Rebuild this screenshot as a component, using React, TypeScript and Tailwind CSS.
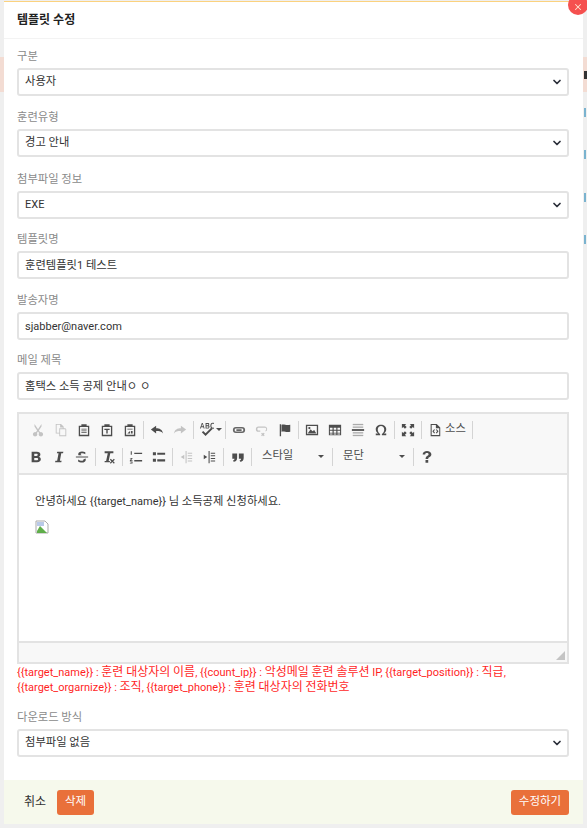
import React from 'react'
import { ChevronDown, X } from 'lucide-react'

// hangul runs get a bigger size than the latin runs around them
function T({ text, ko = 'text-[11.3px]', en = 'text-[11px]' }: { text: string; ko?: string; en?: string }) {
  const parts = text.split(/([\uAC00-\uD7A3\u3131-\u318E]+)/)
  return (
    <>
      {parts.map((p, i) => (
        <span key={i} className={i % 2 === 1 ? ko : en}>
          {p}
        </span>
      ))}
    </>
  )
}

function Label({ text }: { text: string }) {
  return (
    <div className="mb-1 h-[18px] leading-[21px] text-[#8a8a8a]">
      <T text={text} />
    </div>
  )
}

function SelectBox({ value, className = '' }: { value: string; className?: string }) {
  return (
    <div className={`flex h-7 items-center justify-between rounded-[3px] border-2 border-[#e3e3e3] bg-white pl-[6px] pr-[4px] text-[#333] ${className}`}>
      <span className="pt-[1px]">
        <T text={value} />
      </span>
      <ChevronDown size={12} strokeWidth={3.5} className="text-[#2b2f3a]" />
    </div>
  )
}

function TextBox({ value, className = '' }: { value: string; className?: string }) {
  return (
    <div className={`flex h-7 items-center rounded-[3px] border-2 border-[#e3e3e3] bg-white pl-[6px] text-[#333] ${className}`}>
      <span className="pt-[2px]">
        <T text={value} />
      </span>
    </div>
  )
}

function Sep() {
  return <span className="mx-[1.5px] h-[18px] w-px shrink-0 bg-[#d4d4d4]" />
}

function Btn({ children, off = false }: { children: React.ReactNode; off?: boolean }) {
  return (
    <span className={`flex h-5 w-[23px] shrink-0 items-center justify-center text-[#4d4d4d] ${off ? 'opacity-30' : ''}`}>
      <svg width="14" height="14" viewBox="0 0 16 16" fill="currentColor" stroke="none">
        {children}
      </svg>
    </span>
  )
}

function Combo({ label, width }: { label: string; width: number }) {
  return (
    <span className="flex h-5 shrink-0 items-center justify-between pl-[9px] pr-[6px] text-[#4d4d4d]" style={{ width }}>
      <span className="text-[11.3px]">{label}</span>
      <span className="h-0 w-0 border-x-[3px] border-t-[3px] border-x-transparent border-t-[#4d4d4d]" />
    </span>
  )
}

const pasteBoard = <path d="M2 3h3V1.500h6V3h3v12H2zM3.500 4.500v9h9v-9z" />

function Toolbar() {
  return (
    <div className="border-b-2 border-[#e3e3e3] bg-[#f8f8f8] pb-[3px] pl-[7px] pt-[2px]">
      <div className="flex h-[27px] items-center">
        <Btn off><path d="M4 1l4 6 4-6v3L9 8.500l1.500 2a2.500 2.500 0 1 1-1.200.900L8 9.800l-1.300 1.600a2.500 2.500 0 1 1-1.200-.900L7 8.500 4 4z" /></Btn>
        <Btn off><path d="M2 1h6l3 3v2h2l1 1v8H6v-3H2zM3 2v9h3V6h4V5H7V2zM7 7v7h6V7z" /></Btn>
        <Btn>{pasteBoard}<path d="M5 6.500h6v1H5zM5 8.500h6v1H5zM5 10.500h6v1H5z" /></Btn>
        <Btn>{pasteBoard}<path d="M5 6.500h6v1.500H8.800V12H7.200V8H5z" /></Btn>
        <Btn>{pasteBoard}<path d="M5 6.500h6v1H5zM9 9h2v3H9zM5 12l3-3v3z" /></Btn>
        <Sep />
        <Btn><path d="M7 3v3c4 0 7 1.500 8 6-1.500-2.500-4-3-8-3v3L1 7.500z" /></Btn>
        <Btn off><path d="M9 3v3C5 6 2 7.500 1 12c1.500-2.500 4-3 8-3v3l6-4.500z" /></Btn>
        <Sep />
        <span className="flex h-5 w-[28px] shrink-0 items-center pl-[4px] text-[#4d4d4d]">
          <svg width="15" height="15" viewBox="0 0 16 16" fill="currentColor">
            <path d="M1 7l2-6h1l2 6H5L4.600 5.600H2.400L2 7zM2.700 4.600h1.600L3.500 2zM7 1h2.500c1 0 1.500.5 1.500 1.300 0 .5-.3.900-.7 1.100.6.200.9.600.9 1.200C11.200 6.400 10.600 7 9.500 7H7zm1 1v1.500h1.300c.5 0 .7-.3.7-.8s-.2-.7-.7-.7zm0 2.500V6h1.400c.6 0 .8-.3.8-.8s-.2-.7-.8-.7zM16 2.200c-.4-.2-.8-.3-1.200-.3-1 0-1.600.7-1.600 2.100s.6 2.100 1.600 2.100c.4 0 .8-.1 1.200-.3V7c-.4.100-.8.200-1.300.2-1.700 0-2.600-1.200-2.600-3.200s.9-3.200 2.600-3.200c.5 0 .9.100 1.300.2z" />
            <path d="M3 11l1.500-1.500L7 12l6-6 1.500 1.500L7 15z" />
          </svg>
          <span className="ml-[2px] h-0 w-0 border-x-[3px] border-t-[3px] border-x-transparent border-t-[#4d4d4d]" />
        </span>
        <Sep />
        <Btn><path d="M1 8a3.500 3.500 0 0 1 3.500-3.500h7a3.500 3.500 0 0 1 0 7h-7A3.500 3.500 0 0 1 1 8zm2 0c0 1 .7 1.800 1.700 1.800h6.600c1 0 1.700-.8 1.700-1.800s-.7-1.800-1.700-1.800H4.700C3.700 6.200 3 7 3 8zm2-1h6v2H5z" opacity=".85" /></Btn>
        <Btn off><path d="M1 7a3 3 0 0 1 3-3h7a3 3 0 0 1 1 5.800V8.500c.6-.3.800-.8.800-1.500 0-1-.7-1.500-1.500-1.500H4.200c-.9 0-1.500.6-1.500 1.500s.6 1.500 1.500 1.500H6v1.500H4A3 3 0 0 1 1 7zm7 4l1 1 1-1 1 1-1 1 1 1-1 1-1-1-1 1-1-1 1-1-1-1z" /></Btn>
        <Btn><path d="M2 1.500h1.500V15H2zM4 2c3-1 5 1 10 0v8c-5 1-7-1-10 0z" /></Btn>
        <Sep />
        <Btn><path d="M1 2h14v12H1zM2.500 3.500v9h11v-9zM3 12l3.500-5 2 2.500 2-1.500 2.500 4zM5 4.500a1.300 1.300 0 1 1 0 2.600 1.300 1.300 0 0 1 0-2.600z" /></Btn>
        <Btn><path d="M1 2h14v12H1zM2.200 5.500v2.200h3V5.500zm4.300 0v2.200h3V5.500zm4.300 0v2.200h3V5.500zM2.200 8.800V11h3V8.800zm4.300 0V11h3V8.800zm4.300 0V11h3V8.800zM2.200 12v1h3v-1zm4.300 0v1h3v-1zm4.300 0v1h3v-1z" /></Btn>
        <Btn><path d="M2 1h12v1.500H2z" opacity=".45" /><path d="M2 4h12v1.500H2z" opacity=".45" /><path d="M1 7h14v2H1z" /><path d="M2 10.500h12V12H2z" opacity=".45" /><path d="M2 13.500h12V15H2z" opacity=".45" /></Btn>
        <Btn><path d="M8 2c3.500 0 6 2.200 6 5.200 0 2-1 3.700-2.800 4.800H14v2H9v-1.500c1.500-.8 2.700-2.800 2.700-5.100C11.700 5 10 3.400 8 3.400S4.300 5 4.300 7.400c0 2.300 1.200 4.300 2.700 5.100V14H2v-2h2.800C3 10.900 2 9.200 2 7.200 2 4.200 4.500 2 8 2z" /></Btn>
        <Sep />
        <Btn><path d="M1 1h5L4.500 2.500 6.500 4.500 4.500 6.500 2.500 4.500 1 6zM15 1v5l-1.500-1.500-2 2-2-2 2-2L10 1zM1 15v-5l1.500 1.500 2-2 2 2-2 2L6 15zM15 15h-5l1.500-1.500-2-2 2-2 2 2L15 10z" /></Btn>
        <Sep />
        <span className="flex h-5 shrink-0 items-center pl-[5px] text-[#4d4d4d]">
          <svg width="14" height="14" viewBox="0 0 16 16" fill="currentColor" className="mr-[3px]">
            <path d="M3 1h7l4 4v10H3zM4.200 2.200v11.600h8.600V6H9V2.200zM7 7L5 9.500 7 12l1-.8-1.400-1.700L8 7.800zM10 7l2 2.500L10 12l-1-.8 1.400-1.700L9 7.800z" />
          </svg>
          <span className="text-[11.3px]">소스</span>
        </span>
        <span className="ml-[6px] h-[18px] w-px bg-[#d4d4d4]" />
      </div>
      <div className="-ml-[2px] flex h-[27px] items-center">
        <Btn><path d="M3 2h6c2.500 0 4 1.200 4 3 0 1.200-.7 2.200-1.800 2.700C12.800 8.200 13.500 9.300 13.500 10.700c0 2-1.600 3.300-4.300 3.300H3zm3 2.200v2.600h2.500c1 0 1.500-.5 1.500-1.300s-.5-1.300-1.500-1.300zM6 9v2.800h2.800c1.100 0 1.700-.5 1.700-1.400S9.900 9 8.800 9z" /></Btn>
        <Btn><path d="M6 2h7l-.4 1.700h-2L9 12.300h2L10.600 14H3.500l.4-1.700h2l1.600-8.600h-2z" /></Btn>
        <Btn><path d="M1 7.300h14v1.400H1zM4 6c-.2-.4-.3-.8-.3-1.200C3.700 3 5.500 1.800 8 1.800c1.500 0 2.800.3 3.800.9v2.100C10.800 4 9.500 3.600 8.300 3.600c-1.200 0-1.900.4-1.900 1.100 0 .5.400.9 1.300 1.300zM12 9.800c.2.400.3.800.3 1.200 0 2-1.800 3.300-4.400 3.300-1.700 0-3.300-.5-4.300-1.300v-2.200c1.100.9 2.800 1.500 4.200 1.500 1.100 0 1.800-.4 1.800-1.200 0-.1 0-.2-.1-.3z" /></Btn>
        <Sep />
        <Btn><path d="M3 1.500h10v2.200H9.500L7.600 12.500H9V14H3v-1.500h1.700L6.600 3.700H3z" /><path d="M10 10l1.800 1.800L13.600 10l1 1-1.800 1.800 1.800 1.800-1 1-1.800-1.800L10 15.600l-1-1 1.800-1.800L9 11z" /></Btn>
        <Sep />
        <Btn><path d="M6 3h9v1.600H6zM6 11.500h9v1.600H6zM2 1.500h1.200v4H2zM1 9h3v.8l-1.800 2H4v.7H1v-.7L2.800 9.800H1zM1 13h3v2.500H1v-.7h2.200v-.3H1.600V14h1.600v-.3H1z" /></Btn>
        <Btn><path d="M6 3h9v2.500H6zM6 10.500h9V13H6zM1 2.500h3.500V6H1zM1 10h3.500v3.500H1z" /></Btn>
        <Sep />
        <Btn off><path d="M7.500 1h1.200v14H7.500zM10 3h5v1.200h-5zM10 6h5v1.200h-5zM10 9h5v1.200h-5zM10 12h5v1.200h-5zM6 5.500v5L2 8z" /></Btn>
        <Btn><path d="M7.500 1h1.200v14H7.500zM10 3h5v1.200h-5zM10 6h5v1.200h-5zM10 9h5v1.200h-5zM10 12h5v1.200h-5zM2 5.500v5L6 8z" /></Btn>
        <span className="mx-[2.500px] h-[18px] w-px shrink-0 bg-[#d4d4d4]" />
        <Btn><path d="M1.500 4H7v5c0 2.500-1.500 4-4 4.500L2.300 12c1-.3 1.600-.9 1.700-2H1.500zM9 4h5.500v5c0 2.500-1.500 4-4 4.500L9.800 12c1-.3 1.600-.9 1.700-2H9z" /></Btn>
        <Sep />
        <Combo label="스타일" width={77} />
        <Sep />
        <Combo label="문단" width={77} />
        <Sep />
        <Btn><path d="M3 5C3 2.500 5.300 1 8 1s5 1.500 5 3.800c0 1.800-1 2.700-2.400 3.500-1 .6-1.200.9-1.200 1.900H6.400c0-1.700.4-2.500 1.800-3.300 1-.6 1.600-1.100 1.600-2 0-.9-.7-1.500-1.900-1.500S6 4 5.900 5zM6.300 11.500h3.100V14.700H6.300z" /></Btn>
      </div>
    </div>
  )
}

function Mark({ className }: { className: string }) {
  return <div className={`ml-[1px] h-[9px] w-[2px] bg-[#7ab3cf] ${className}`} />
}

export default function App() {
  return (
    <div
      className="flex h-[828px] w-[587px] overflow-hidden bg-[#efefef] text-[11px]"
      style={{ fontFamily: 'Roboto, "Noto Sans CJK KR", sans-serif' }}
    >
      <div className="w-1 shrink-0 pt-[57px]">
        <div className="h-[35px] bg-[#f3dcd3]" />
      </div>
      <div className="relative mb-1 mt-[1px] flex w-[579px] shrink-0 flex-col border-t border-[#fbd27f] bg-white">
        <div className="absolute -right-[5px] -top-[7px] flex h-[20px] w-[20px] items-center justify-center rounded-full bg-[#f5504f] text-[#ffe3d0]">
          <X size={10} strokeWidth={2.5} className="mt-[3px]" />
        </div>
        <div className="flex h-[37px] items-center border-b border-[#f3f3f3] pl-[13px] text-[12px] font-bold text-[#222]">
          템플릿 수정
        </div>
        <div className="flex-1 pl-[13px] pr-[14px] pt-[7px]">
          <Label text="구분" />
          <SelectBox value="사용자" className="mb-[11px]" />
          <Label text="훈련유형" />
          <SelectBox value="경고 안내" className="mb-[12px]" />
          <Label text="첨부파일 정보" />
          <SelectBox value="EXE" className="mb-[10px]" />
          <Label text="템플릿명" />
          <TextBox value="훈련템플릿1 테스트" className="mb-[11px]" />
          <Label text="발송자명" />
          <TextBox value="sjabber@naver.com" className="mb-[10px]" />
          <Label text="메일 제목" />
          <TextBox value="홈택스 소득 공제 안내ㅇ ㅇ" className="mb-[12px]" />

          <div className="flex h-[252px] flex-col border-2 border-[#e3e3e3]">
            <Toolbar />
            <div className="flex-1 px-4 pt-[18px] text-[#333]">
              <p className="leading-[18px]">
                <T text="안녕하세요 {{target_name}} 님 소득공제 신청하세요." />
              </p>
              <svg width="14" height="14" viewBox="0 0 14 14" className="mt-[9px]">
                <path d="M1 1h9l3 3v9H1z" fill="#fff" stroke="#a9a9a9" />
                <path d="M2 2h7v4H2z" fill="#b9c9e8" />
                <path d="M2 11l3-5 4 4 3 3H2z" fill="#5fae4a" />
              </svg>
            </div>
            <div className="relative h-[21px] border-t-2 border-[#e3e3e3] bg-[#f8f8f8]">
              <span className="absolute bottom-[2px] right-[2px] h-0 w-0 border-b-[9px] border-l-[9px] border-b-[#c4c4c4] border-l-transparent" />
            </div>
          </div>

          <p className="pt-[1px] leading-[15px] text-[#ff1f1f]">
            <T ko="text-[12px]" text="{{target_name}} : 훈련 대상자의 이름, {{count_ip}} : 악성메일 훈련 솔루션 IP, {{target_position}} : 직급," />
            <br />
            <T ko="text-[12px]" text="{{target_orgarnize}} : 조직, {{target_phone}} : 훈련 대상자의 전화번호" />
          </p>

          <div className="mt-[12px]">
            <Label text="다운로드 방식" />
            <SelectBox value="첨부파일 없음" />
          </div>
        </div>
        <div className="flex h-[44px] items-center justify-between bg-[#f6f9ec] pl-[20px] pr-[14px]">
          <div className="flex items-center gap-[11px]">
            <span className="text-[#333]"><T ko="text-[12px]" text="취소" /></span>
            <span className="flex h-[25px] w-[37px] items-center justify-center rounded-[3px] bg-[#e9703a] text-[11.5px] text-white">삭제</span>
          </div>
          <span className="flex h-[25px] w-[58px] items-center justify-center rounded-[3px] bg-[#e9703a] text-[11.5px] text-white">수정하기</span>
        </div>
      </div>
      <div className="w-1 shrink-0 pt-[57px]">
        <div className="h-[35px] bg-[#f3dcd3] pt-[14px]">
          <div className="ml-[1px] h-2 w-[3px] bg-[#333]" />
        </div>
        <Mark className="mt-4" />
        <Mark className="mt-[33px]" />
        <Mark className="mt-[34px]" />
        <Mark className="mt-[33px]" />
      </div>
    </div>
  )
}
